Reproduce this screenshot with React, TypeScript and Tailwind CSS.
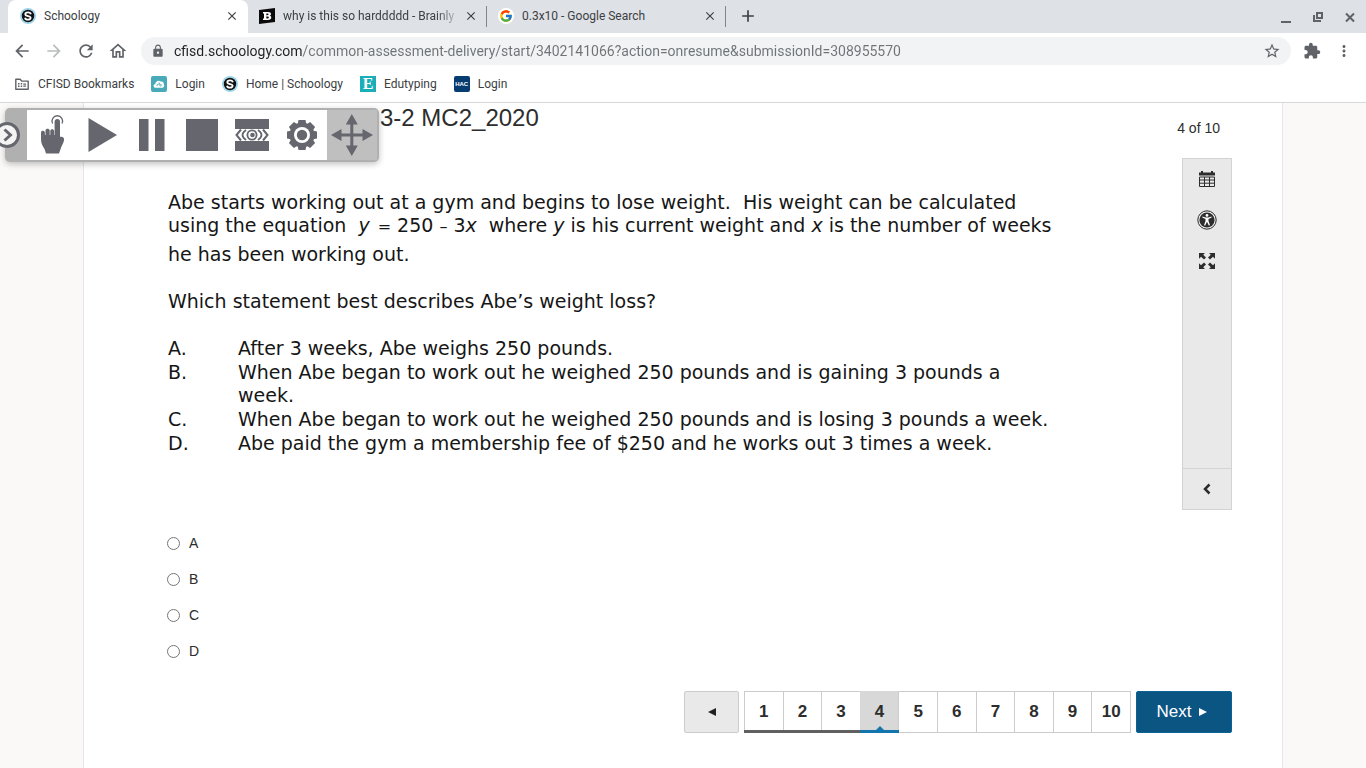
import { useState, type ReactNode } from "react";
import { FcGoogle } from "react-icons/fc";
import {
  MdAdd,
  MdArrowBack,
  MdArrowForward,
  MdClose,
  MdExtension,
  MdLock,
  MdMoreVert,
  MdOutlineHome,
  MdRefresh,
  MdStarBorder
} from "react-icons/md";

const OPTIONS = [
  { letter: "A", text: "After 3 weeks, Abe weighs 250 pounds." },
  { letter: "B", text: "When Abe began to work out he weighed 250 pounds and is gaining 3 pounds a week." },
  { letter: "C", text: "When Abe began to work out he weighed 250 pounds and is losing 3 pounds a week." },
  { letter: "D", text: "Abe paid the gym a membership fee of $250 and he works out 3 times a week." }
];

const PAGES = [1, 2, 3, 4, 5, 6, 7, 8, 9, 10];

function SchoologyIcon() {
  return (
    <svg viewBox="0 0 16 16" className="size-4 shrink-0">
      <circle cx="8" cy="8" r="8" fill="#9fd5ea" />
      <circle cx="8" cy="8" r="6.2" fill="#111" />
      <path d="M10.9 6.300C10.600 5 9.500 4.400 8 4.400c-1.700 0-2.700.8-2.700 1.900 0 2.600 5.300 1.100 5.300 3.500 0 1.200-1.100 1.900-2.700 1.900-1.600 0-2.600-.7-2.900-2" fill="none" stroke="#fff" strokeWidth="1.800" />
    </svg>
  );
}

function BrainlyIcon() {
  return (
    <svg viewBox="0 0 16 16" className="size-4 shrink-0">
      <path d="M0 2 16 0v14L0 16z" fill="#0a0a0a" />
      <path d="M4 4h5c2 0 3 .7 3 2 0 .9-.5 1.500-1.300 1.700 1 .2 1.600.8 1.600 1.800 0 1.600-1.200 2.500-3.300 2.500H4v-1.500h1V5.500H4zM7.300 5.500v1.700h1c.8 0 1.200-.3 1.200-.9 0-.5-.4-.8-1.100-.8zm0 3.100v1.900h1.200c.8 0 1.300-.3 1.300-1s-.5-.9-1.300-.9z" fill="#fff" fillRule="evenodd" />
    </svg>
  );
}

function FolderIcon() {
  return (
    <svg viewBox="0 0 16 16" className="size-4 shrink-0">
      <path d="M1.800 3.300h4.400l1.500 1.800h6.500v8.100H1.800z" fill="none" stroke="#5f6368" strokeWidth="1.400" strokeLinejoin="round" />
      <path d="M4 7h1.500v1.400H4zm0 2.600h1.500V11H4zM6.700 7h1.500v1.400H6.700zm0 2.600h1.500V11H6.700zM9.300 7.500H12v1.200H9.300zm0 2.100H12v1.200H9.300z" fill="#5f6368" />
    </svg>
  );
}

function CloudIcon() {
  return (
    <svg viewBox="0 0 16 16" className="size-4 shrink-0">
      <rect width="16" height="16" rx="2" fill="#48a9b9" />
      <path d="M4.800 11.800C2 11.800 2 8.300 4.300 8 4.300 5 8 3.600 9.700 5.500c2-.4 3.300 1 3 2.500 1.200 1.800.2 3.800-1.800 3.800z" fill="#fff" />
      <path d="M6 10c0-2 2-2.500 2.500-1s2 1.300 2-.5M8 6.500 9.500 9" fill="none" stroke="#48a9b9" strokeWidth=".9" />
    </svg>
  );
}

function EdutypingIcon() {
  return (
    <span className="flex size-4 items-center justify-center bg-[#1badb8] font-['Liberation_Serif',serif] text-base leading-4 font-bold text-white">
      E
    </span>
  );
}

function HacIcon() {
  return (
    <span className="flex size-4 items-center justify-center rounded-[2px] bg-[#063c70] font-['Liberation_Sans',sans-serif] text-[6px] leading-4 font-bold text-white">
      HAC
    </span>
  );
}

function Tab({ icon, title, active, faded }: { icon: ReactNode; title: string; active?: boolean; faded?: boolean }) {
  return (
    <div
      className={
        active
          ? "flex w-60 items-center rounded-t-lg bg-white pr-[9px] pb-px pl-3"
          : "flex w-[238px] items-center pr-2 pb-px pl-[11px]"
      }
    >
      {icon}
      <span
        className={
          faded
            ? "ml-2 flex-1 whitespace-nowrap [mask-image:linear-gradient(to_right,black_85%,transparent_98%)]"
            : "ml-2 flex-1 whitespace-nowrap"
        }
      >
        {title}
      </span>
      <button type="button" aria-label="Close tab">
        <MdClose className="size-3.5" />
      </button>
    </div>
  );
}

function Bookmark({ icon, label }: { icon: ReactNode; label: string }) {
  return (
    <a href="#" className="flex items-center gap-2">
      {icon}
      {label}
    </a>
  );
}

function Browser() {
  return (
    <header className="font-[Roboto,sans-serif] text-xs text-[#3c4043]">
      <div className="flex h-[33px] bg-[#dee1e6] pl-2">
        <Tab active icon={<SchoologyIcon />} title="Schoology" />
        <Tab faded icon={<BrainlyIcon />} title="why is this so harddddd - Brainly" />
        <div className="my-1.5 w-px bg-[#80868b]" />
        <Tab icon={<span className="flex size-4 items-center justify-center rounded-full bg-white"><FcGoogle className="size-3.5" /></span>} title="0.3x10 - Google Search" />
        <div className="my-1.5 w-px bg-[#80868b]" />
        <button type="button" aria-label="New tab" className="ml-3 pb-px">
          <MdAdd className="size-5" />
        </button>
        <div className="ml-auto flex items-center gap-4 pr-2 text-[#5f6368]">
          <button type="button" aria-label="Minimize">
            <svg viewBox="0 0 16 16" className="size-4"><path d="M3 12h10v2H3z" fill="currentColor" /></svg>
          </button>
          <button type="button" aria-label="Restore">
            <svg viewBox="0 0 16 16" className="size-4" fill="none" stroke="currentColor" strokeWidth="2">
              <path d="M7 4h5v5H7zM4 6v6h7" />
            </svg>
          </button>
          <button type="button" aria-label="Close">
            <svg viewBox="0 0 16 16" className="size-4" stroke="currentColor" strokeWidth="2"><path d="m4 4.500 8 8m0-8-8 8" /></svg>
          </button>
        </div>
      </div>

      <div className="flex h-9 items-center bg-white pr-[13px] pl-3 text-[#5f6368]">
        <div className="flex gap-3">
          <button type="button" aria-label="Back"><MdArrowBack className="size-5" /></button>
          <button type="button" aria-label="Forward" className="text-[#babcbe]"><MdArrowForward className="size-5" /></button>
          <button type="button" aria-label="Reload"><MdRefresh className="size-5" /></button>
          <button type="button" aria-label="Home"><MdOutlineHome className="size-5" /></button>
        </div>
        <div className="ml-[13px] flex h-7 flex-1 items-center rounded-full bg-[#f1f3f4] pr-2.5 pl-2.5">
          <MdLock className="size-3.5" />
          <input
            type="text"
            aria-label="Address"
            defaultValue="cfisd.schoology.com/common-assessment-delivery/start/3402141066?action=onresume&submissionId=308955570"
            className="ml-[9px] flex-1 bg-[linear-gradient(to_right,#202124_129px,#6f7377_129px)] bg-clip-text text-sm text-transparent outline-none"
          />
          <button type="button" aria-label="Bookmark this page"><MdStarBorder className="size-[18px]" /></button>
        </div>
        <div className="ml-3 flex items-center gap-3.5">
          <button type="button" aria-label="Extensions"><MdExtension className="size-[18px]" /></button>
          <button type="button" aria-label="Menu"><MdMoreVert className="size-[18px]" /></button>
        </div>
      </div>

      <nav className="flex h-[34px] items-center gap-[17px] border-b border-[#d5d7d9] bg-white pb-1 pl-3.5">
        <Bookmark icon={<FolderIcon />} label="CFISD Bookmarks" />
        <Bookmark icon={<CloudIcon />} label="Login" />
        <Bookmark icon={<SchoologyIcon />} label="Home | Schoology" />
        <Bookmark icon={<EdutypingIcon />} label="Edutyping" />
        <Bookmark icon={<HacIcon />} label="Login" />
      </nav>
    </header>
  );
}

function ToolButton({ label, children }: { label: string; children: ReactNode }) {
  return (
    <button type="button" aria-label={label} className="block size-[50px]">
      <svg viewBox="0 0 50 50" className="size-[50px]" fill="currentColor">
        {children}
      </svg>
    </button>
  );
}

// text-to-speech bar that floats over the page
function ReaderBar() {
  return (
    <div className="absolute top-[5px] left-[5px] flex h-[54px] items-center rounded-[5px] bg-[#b0b0b0] pr-0.5 text-[#66676e] shadow-[0_2px_6px_rgba(0,0,0,0.25)]">
      <button type="button" aria-label="Collapse" className="-ml-3 w-[34px]">
        <svg viewBox="0 0 34 30" className="h-[30px] w-[34px]">
          <circle cx="14" cy="15" r="11.500" fill="#f4f4f4" stroke="#66676e" strokeWidth="3" />
          <path d="m11.500 9.500 6 5.500-6 5.500" fill="none" stroke="#66676e" strokeWidth="3" />
        </svg>
      </button>
      <div className="flex bg-white">
        <ToolButton label="Click to speak">
          <path d="M27.600 25V11.800a2.700 2.700 0 0 1 5.400 0V27c2.700-.6 4.500.8 4 3.500-.7 3.500-2.600 5-3.400 8.500l-1.600 4.500H19L17.500 39c-2-3-3.500-5.500-3.500-10v-6.500c0-2.200 3.600-2.200 3.900 0V25h.6v-4.500c0-2.400 4-2.400 4.200 0V25h.6v-4c0-2.300 3.600-2.300 3.800 0v4z" />
          <path d="M25.600 13.500a5.300 5.300 0 1 1 9.400 0" fill="none" stroke="currentColor" strokeWidth="1.300" />
        </ToolButton>
        <ToolButton label="Play"><path d="M11.500 8v34L40 25z" /></ToolButton>
        <ToolButton label="Pause"><path d="M12 9h9.500v32H12zM28 9h9.500v32H28z" /></ToolButton>
        <ToolButton label="Stop"><path d="M9 9h32v32H9z" /></ToolButton>
        <ToolButton label="Screen mask">
          <path d="M8 9h34v10H8zM8 31h34v10H8z" />
          <path d="M14 19.500 9.500 25l4.500 5.500M36 19.500l4.500 5.500-4.500 5.500" fill="none" stroke="currentColor" strokeWidth="2" />
          <path d="M19 20q-7 5 0 10M31 20q7 5 0 10" fill="none" stroke="currentColor" strokeWidth="1.800" />
          <circle cx="25" cy="25" r="5.500" />
          <circle cx="25" cy="25" r="3.700" fill="#fff" />
          <circle cx="25.500" cy="25" r="2.300" />
        </ToolButton>
        <ToolButton label="Settings">
          <circle cx="25" cy="25" r="12.500" />
          <path d="M21.500 10h7l1 5h-9zM21.500 40h7l1-5h-9zM10 21.500v7l5 1v-9zM40 21.500v7l-5 1v-9z" />
          <path d="m11.900 16.900 5-5 4.300 2.800-6.500 6.500zM38.100 33.100l-5 5-4.300-2.800 6.500-6.500zM33.100 11.900l5 5-2.800 4.300-6.500-6.500zM16.900 38.100l-5-5 2.800-4.300 6.500 6.500z" />
          <circle cx="25" cy="25" r="8" fill="#fff" />
          <circle cx="25" cy="25" r="5.200" />
        </ToolButton>
      </div>
      <div className="bg-[#bfbfbf]">
        <ToolButton label="Move">
          <path d="M23.300 14h3v9.500H36v3h-9.700V36h-3v-9.500H14v-3h9.300z" />
          <path d="m24.800 4 6 10.500h-12zM24.800 46l6-10.500h-12zM4 25l10.500-6v12zM46 25l-10.500-6v12z" />
        </ToolButton>
      </div>
    </div>
  );
}

function SidePanel() {
  return (
    <aside className="flex h-[352px] w-[50px] shrink-0 flex-col items-center border border-[#d3d3d3] bg-[#e9e9e9] text-[#2d2d2d]">
      <div className="flex flex-1 flex-col items-center gap-[21px] pt-2.5">
        <button type="button" aria-label="Calendar" className="block">
          <svg viewBox="0 0 20 20" className="size-5">
            <path d="M2 3.500h2V2h2v1.500h8V2h2v1.500h2v3H2z" fill="currentColor" />
            <path d="M2.500 8h15v9.500h-15zM2.500 11h15M2.500 14.200h15M7.500 8v9.500M12.500 8v9.500" fill="none" stroke="currentColor" />
          </svg>
        </button>
        <button type="button" aria-label="Accessibility" className="block">
          <svg viewBox="0 0 20 20" className="size-5">
            <circle cx="10" cy="10" r="9.200" fill="#e9e9e9" stroke="currentColor" />
            <circle cx="10" cy="10" r="7.600" fill="currentColor" />
            <circle cx="10" cy="5.400" r="1.400" fill="#fff" />
            <path d="m5.500 6.500 3 .9h3l3-.9.2 1-3.200 1.500v2l1.500 4.300-1.200.3L10 11.800l-1.800 3.800-1.200-.3L8.500 11V9L5.300 7.500z" fill="#fff" />
          </svg>
        </button>
        <button type="button" aria-label="Full screen" className="block">
          <svg viewBox="0 0 20 20" className="size-5" fill="currentColor">
            <path d="M2 2h6L6.200 3.800 9 6.600 7 8.600 4 5.800 2 7.700zM18 2v5.700l-2-1.900-3 2.800-2-2 2.800-2.800L12 2zM2 18v-5.700l2 1.900 3-2.800 2 2-2.800 2.800L8 18zM18 18h-6l1.800-1.800-2.800-2.800 2-2 3 2.800 2-1.900z" />
          </svg>
        </button>
      </div>
      <button type="button" aria-label="Expand panel" className="flex h-[41px] w-full items-center justify-center border-t border-[#d3d3d3]">
        <svg viewBox="0 0 12 12" className="size-3"><path d="M8.500 1.500 4 6l4.500 4.500" fill="none" stroke="currentColor" strokeWidth="2.500" /></svg>
      </button>
    </aside>
  );
}

function Question() {
  return (
    <div className="pt-[33px] font-['DejaVu_Sans',sans-serif] text-[19px] leading-[23px] text-[#161616]">
      <p className="whitespace-pre-wrap">
        {"Abe starts working out at a gym and begins to lose weight.  His weight can be calculated"}
        <br />
        using the equation <i className="ml-1.5">y</i>
        <span className="mr-1.5 ml-2 text-base">=</span>250<span className="mx-1.5 text-base">–</span>3<i className="mr-1.5">x</i>{" "}
        where <i>y</i> is his current weight and <i>x</i> is the number of weeks
      </p>
      <p className="mt-1">he has been working out.</p>
      <p className="mt-6">Which statement best describes Abe’s weight loss?</p>
      <ol className="mt-6 flex flex-col gap-px">
        {OPTIONS.map((option) => (
          <li key={option.letter} className="flex">
            <span className="w-[70px] shrink-0">{option.letter}.</span>
            <span className="flex-1">{option.text}</span>
          </li>
        ))}
      </ol>
    </div>
  );
}

function Answers() {
  const [answer, setAnswer] = useState("");

  return (
    <div className="mt-[70px] flex flex-col items-start">
      {OPTIONS.map(({ letter }) => (
        <label key={letter} className="flex h-9 items-center gap-[9px] text-sm">
          <input
            type="radio"
            name="answer"
            value={letter}
            checked={answer === letter}
            onChange={() => setAnswer(letter)}
            className="-ml-px size-[13px] appearance-none rounded-full border border-[#767676] bg-white checked:border-4"
          />
          {letter}
        </label>
      ))}
    </div>
  );
}

function Pager() {
  const [page, setPage] = useState(4);

  return (
    <nav className="flex h-[42px] justify-end gap-[5px] pr-[50px] text-[17px]">
      <button
        type="button"
        aria-label="Previous"
        onClick={() => setPage(Math.max(1, page - 1))}
        className="flex w-[55px] items-center justify-center rounded-[2px] border border-[#ccc] bg-[#e9e9e9]"
      >
        <svg viewBox="0 0 8 8" className="size-2"><path d="M8 0v8L0 4z" fill="#222" /></svg>
      </button>
      <div className="flex w-[387px] font-bold">
        {PAGES.map((n) => (
          <button
            key={n}
            type="button"
            onClick={() => setPage(n)}
            className={
              n === page
                ? "relative flex-1 border-y border-l border-[#d8d8d8] bg-[#d8d8d8] after:absolute after:-bottom-px after:-left-px after:h-[3px] after:w-[calc(100%+2px)] after:bg-[#1275ab]"
                : n < page
                  ? "relative flex-1 border-y border-l border-[#ccc] after:absolute after:-bottom-px after:-left-px after:h-[3px] after:w-[calc(100%+2px)] after:bg-[#606060]"
                  : "flex-1 border-y border-l border-[#ccc] last:border-r"
            }
          >
            {n}
            {n === page && (
              <svg viewBox="0 0 8 4" className="absolute bottom-0.5 left-1/2 h-1 w-2 -translate-x-1/2"><path d="M4 0 8 4H0z" fill="#1275ab" /></svg>
            )}
          </button>
        ))}
      </div>
      <button
        type="button"
        onClick={() => setPage(Math.min(10, page + 1))}
        className="flex w-24 items-center justify-center gap-2 rounded-[2px] border border-[#0a6295] bg-[#0b5583] pr-1 text-white"
      >
        Next
        <svg viewBox="0 0 8 8" className="size-2"><path d="M0 0v8l8-4z" fill="#fff" /></svg>
      </button>
    </nav>
  );
}

export default function App() {
  return (
    <div className="flex min-h-screen flex-col bg-[#faf9f8]">
      <Browser />
      <div className="relative flex flex-1 flex-col overflow-hidden font-['Liberation_Sans',sans-serif] text-[#2d2d2d]">
        <main className="mx-auto w-full max-w-[1200px] flex-1 border-x border-[#e6e6e6] bg-white pb-8">
          <div className="flex h-[55px] items-start justify-between pr-[62px] pl-[296px]">
            <h1 className="text-2xl leading-[30px]">3-2 MC2_2020</h1>
            <p className="pt-[15px] text-sm">4 of 10</p>
          </div>
          <div className="flex pr-[50px] pl-[84px]">
            <div className="flex-1 pr-[126px]">
              <Question />
              <Answers />
            </div>
            <SidePanel />
          </div>
          <div className="mt-[22px]">
            <Pager />
          </div>
        </main>
        <ReaderBar />
      </div>
    </div>
  );
}
